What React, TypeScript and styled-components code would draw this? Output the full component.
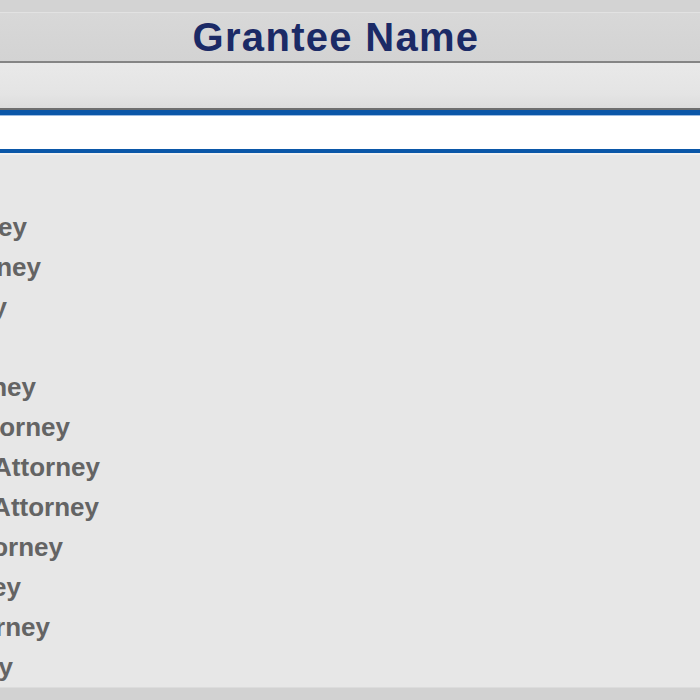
import styled, { createGlobalStyle } from 'styled-components'

const Global = createGlobalStyle`
    html, body {
        margin: 0;
        padding: 0;
        background: #e7e7e7;
        overflow: hidden;
    }
    body {
        font-family: "Liberation Sans", Arial, sans-serif;
    }
`

const Page = styled.div`
    display: flex;
    flex-direction: column;
    width: 700px;
    height: 700px;
    overflow: hidden;
    background: #e7e7e7;
`

const TopBand = styled.div`
    height: 12px;
    background: #d3d3d3;
    border-bottom: 1px solid #e2e2e2;
`

const Header = styled.div`
    display: flex;
    align-items: center;
    justify-content: center;
    height: 48px;
    padding-right: 28px;
    background: linear-gradient(#d8d8d8, #d3d3d3);
    border-bottom: 2px solid #858585;
`

const Title = styled.h1`
    margin: 0;
    font-size: 40px;
    line-height: 1;
    font-weight: 700;
    letter-spacing: 1.3px;
    color: #1b2a66;
`

const FilterRow = styled.div`
    height: 45px;
    background: linear-gradient(#e9e9e9, #e4e4e4 70%, #dcdcdc);
    border-bottom: 2px solid #6e6e6e;
`

const Search = styled.div`
    height: 34px;
    background: #fff;
    border-top: 5px solid #0b57a8;
    border-bottom: 4px solid #0b57a8;
    box-shadow: inset 0 1px 0 #9cbbe0;
`

const Divider = styled.div`
    height: 2px;
    background: #f1f1f1;
`

const List = styled.div`
    display: flex;
    flex-direction: column;
    padding-top: 50px;
    flex: 1;
    overflow: hidden;
    background: #e7e7e7;
`

const Row = styled.div<{ $end: number }>`
    display: flex;
    flex-shrink: 0;
    justify-content: flex-end;
    width: ${(p) => p.$end}px;
    height: 40px;
    padding-top: 2px;
    box-sizing: border-box;
    line-height: 40px;
    font-size: 26px;
    font-weight: 700;
    color: #646464;
    white-space: nowrap;
`

const BottomBand = styled.div`
    height: 12px;
    background: #d2d2d2;
    border-top: 1px solid #dcdcdc;
`

const rows = [
    { label: 'District Attorney', end: 27 },
    { label: 'City Attorney', end: 41 },
    { label: 'Attorney', end: 7 },
    { label: '', end: 0 },
    { label: 'County Attorney', end: 36 },
    { label: 'State Attorney', end: 70 },
    { label: 'Power of Attorney', end: 100 },
    { label: 'Letter of Attorney', end: 99 },
    { label: 'Trust Attorney', end: 63 },
    { label: 'Estate Attorney', end: 21 },
    { label: 'Deputy Attorney', end: 50 },
    { label: 'Attorney', end: 13 }
]

export default function App() {
    return (
        <Page>
            <Global />
            <TopBand />
            <Header>
                <Title>Grantee Name</Title>
            </Header>
            <FilterRow />
            <Search />
            <Divider />
            <List>
                {rows.map((r, i) => (
                    <Row key={i} $end={r.end}>
                        <span>{r.label}</span>
                    </Row>
                ))}
            </List>
            <BottomBand />
        </Page>
    )
}
